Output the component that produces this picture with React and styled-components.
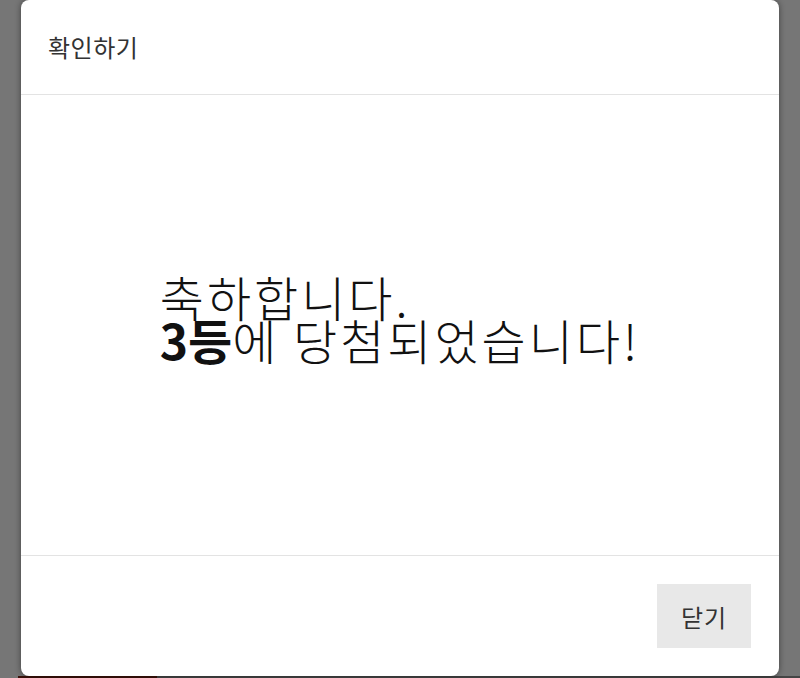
import React from "react";
import styled, { createGlobalStyle } from "styled-components";

const Global = createGlobalStyle`
  html, body { margin: 0; padding: 0; height: 100%; }
  body {
    background-color: #767676;
    background-image:
      linear-gradient(to right, #767676 0, #767676 18px, #3a1109 18px, #3a1109 157px, #454545 157px, #454545 100%);
    background-size: 100% 2px;
    background-position: 0 676px;
    background-repeat: no-repeat;
    font-family: "Noto Sans CJK KR", "Noto Sans", sans-serif;
    overflow: hidden;
  }
  #root { height: 678px; }
`;

const Page = styled.div`
  height: 678px;
  display: flex;
  justify-content: center;
  align-items: flex-start;
`;

const Modal = styled.div`
  width: 758px;
  height: 676px;
  background: #fff;
  border-radius: 8px;
  box-shadow: 0 0 6px rgba(0, 0, 0, 0.45);
  display: flex;
  flex-direction: column;
  overflow: hidden;
`;

const Header = styled.div`
  height: 95px;
  box-sizing: border-box;
  border-bottom: 1px solid #e3e3e3;
  padding: 0 27px 2px;
  display: flex;
  align-items: center;
  font-size: 24px;
  letter-spacing: 0.5px;
  color: #333;
`;

const Body = styled.div`
  flex: 1;
  display: flex;
  align-items: center;
  justify-content: center;
  padding-bottom: 14px;
`;

const Message = styled.p`
  margin: 0;
  font-size: 48px;
  line-height: 43px;
  letter-spacing: 3px;
  color: #111;
  text-align: left;
  font-weight: 300;
`;

const Strong = styled.b`
  font-weight: 700;
  letter-spacing: 0;
`;

const Footer = styled.div`
  height: 121px;
  box-sizing: border-box;
  border-top: 1px solid #e3e3e3;
  padding: 28px;
  display: flex;
  justify-content: flex-end;
  align-items: center;
`;

const Button = styled.button`
  width: 94px;
  height: 64px;
  border: none;
  background: #e8e8e8;
  font-family: inherit;
  font-size: 24px;
  letter-spacing: 1px;
  color: #333;
  cursor: pointer;
`;

export default function App() {
  return (
    <>
      <Global />
      <Page>
        <Modal>
          <Header>확인하기</Header>
          <Body>
            <Message>
              축하합니다.
              <br />
              <Strong>3등</Strong>에 당첨되었습니다!
            </Message>
          </Body>
          <Footer>
            <Button>닫기</Button>
          </Footer>
        </Modal>
      </Page>
    </>
  );
}
